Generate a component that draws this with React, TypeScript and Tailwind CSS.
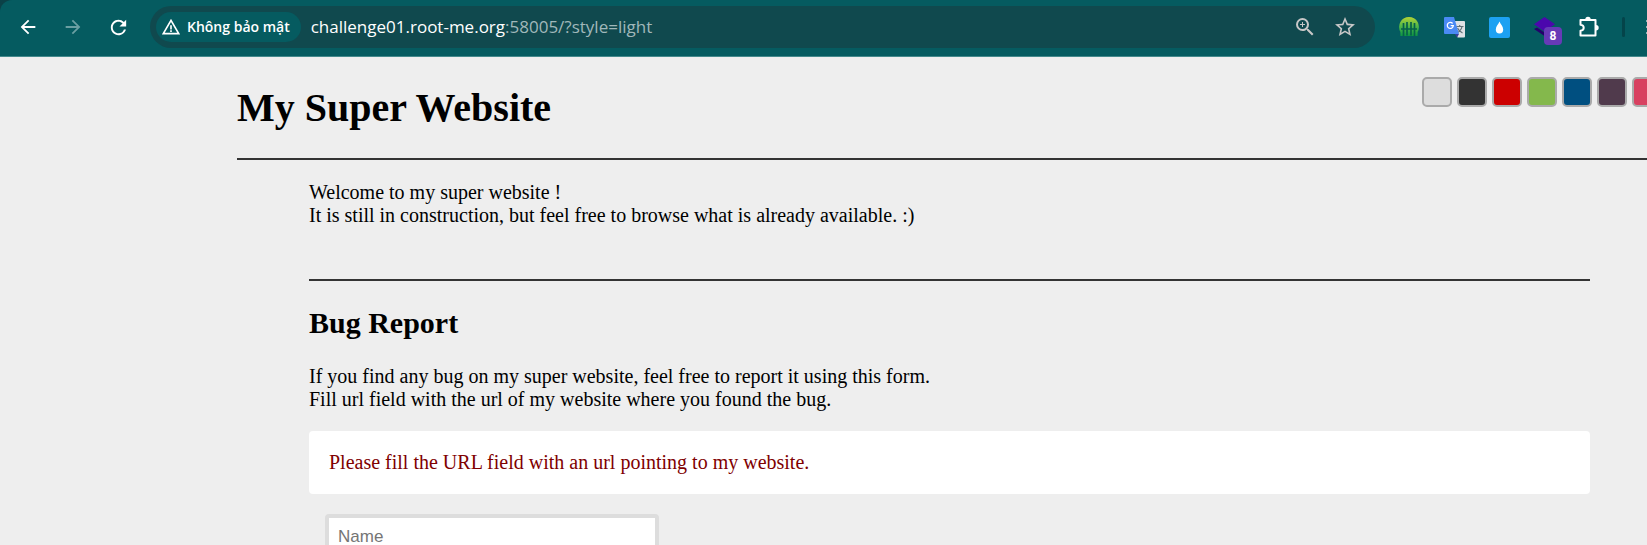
import type { ReactNode } from "react";
import { MdArrowBack, MdArrowForward, MdRefresh, MdStarBorder, MdWarningAmber, MdZoomIn } from "react-icons/md";

const themes = [
  { name: "light", color: "bg-[#dddddd]" },
  { name: "dark", color: "bg-[#333333]" },
  { name: "red", color: "bg-[#cc0000]" },
  { name: "green", color: "bg-[#84b84c]" },
  { name: "blue", color: "bg-[#004f80]" },
  { name: "purple", color: "bg-[#503a4c]" },
  { name: "pink", color: "bg-[#d84060]" },
];

function IconButton({ label, disabled, children }: { label: string; disabled?: boolean; children: ReactNode }) {
  return (
    <button
      type="button"
      aria-label={label}
      disabled={disabled}
      className="flex size-6 shrink-0 items-center justify-center text-white disabled:text-[#6a9fa2]"
    >
      {children}
    </button>
  );
}

function TowersIcon() {
  return (
    <svg viewBox="0 0 20 20" className="size-5" aria-hidden="true">
      <defs>
        <linearGradient id="towers" x1="0" y1="0" x2="0" y2="1">
          <stop offset="0" stopColor="#b4d334" />
          <stop offset="0.5" stopColor="#4db648" />
          <stop offset="1" stopColor="#0b9444" />
        </linearGradient>
      </defs>
      <path d="M10 0a10 10 0 0 1 8.600 15V19H1.400v-4A10 10 0 0 1 10 0z" fill="url(#towers)" />
      <path
        d="M4.500 6v13M8 5v13.500M12 5v13.500M15.500 6v13M2 12h16"
        stroke="#06604a"
        strokeWidth="1.700"
        fill="none"
      />
    </svg>
  );
}

function TranslateIcon() {
  return (
    <svg viewBox="0 0 21 21" className="size-[21px]" aria-hidden="true">
      <path d="M8 4h12a1 1 0 0 1 1 1v14.500a1 1 0 0 1-1 1h-6.500z" fill="#dfe1e5" />
      <path d="M12 9.500h7.500M15.700 8v1.500M18 9.500c-.5 3-2.500 5-5 6.500M13.500 11c1 2.500 3 4 5 5" stroke="#5f7076" strokeWidth="1.200" fill="none" />
      <path d="M11 17h4l-2 3.500z" fill="#3a3f9c" />
      <path d="M1 0h9l5 17H1a1 1 0 0 1-1-1V1a1 1 0 0 1 1-1z" fill="#4a8af4" />
      <path d="M8.600 6.500A3 3 0 1 0 9.300 8.700H6.700" stroke="#fff" strokeWidth="1.300" fill="none" />
    </svg>
  );
}

function DropIcon() {
  return (
    <svg viewBox="0 0 21 21" className="size-[21px]" aria-hidden="true">
      <rect width="21" height="21" rx="2" fill="#1da1f2" />
      <path d="M10.500 4.500c1 2.500 3.700 5 3.700 8a3.700 3.900 0 0 1-7.400 0c0-3 2.700-5.500 3.700-8z" fill="#fff" />
    </svg>
  );
}

function LayersIcon() {
  return (
    <svg viewBox="0 0 21 21" className="size-[21px]" aria-hidden="true">
      <path d="M0 12l3-1.500 7.500 5L18 10.500l3 1.500-10.500 7z" fill="#23006b" />
      <path d="M10.500 0L21 7.200 10.500 14.500 0 7.200z" fill="#4b07ad" />
    </svg>
  );
}

function PuzzleIcon() {
  return (
    <svg viewBox="0 0 22 22" className="size-[22px]" aria-hidden="true">
      <path
        d="M2.500 4h15v15.500H2.500v-4.700c4.300-.4 4.300-5.600 0-6z"
        fill="none"
        stroke="#fff"
        strokeWidth="2"
        strokeLinejoin="round"
      />
      <path d="M7.300 3.500a2.700 2.700 0 0 1 5.400 0zM18 9a2.700 2.700 0 0 1 0 5.400z" fill="#fff" />
    </svg>
  );
}

function Toolbar() {
  return (
    <div className="bg-[#0b4147]">
      <header className="flex h-[57px] items-center overflow-hidden rounded-tl-xl border-b border-[#43898c] bg-[#055b60] pb-0.5 font-['Open_Sans','Noto_Sans',sans-serif]">
        <nav aria-label="Navigation" className="flex shrink-0 gap-[21px] pr-5 pl-4">
          <IconButton label="Back">
            <MdArrowBack className="size-[22px]" />
          </IconButton>
          <IconButton label="Forward" disabled>
            <MdArrowForward className="size-[22px]" />
          </IconButton>
          <IconButton label="Reload">
            <MdRefresh className="size-[23px]" />
          </IconButton>
        </nav>
        <div className="flex h-[42px] min-w-0 flex-1 items-center rounded-full bg-[#10494e] pr-[18px] pl-1.5">
          <button
            type="button"
            className="flex h-[30px] shrink-0 items-center gap-1.5 rounded-full bg-[#055b60] pr-[11px] pl-[5px] text-sm font-semibold whitespace-nowrap text-white"
          >
            <MdWarningAmber className="size-5" />
            Không bảo mật
          </button>
          <div
            role="textbox"
            aria-label="Address"
            aria-readonly="true"
            tabIndex={0}
            className="ml-[10px] min-w-0 flex-1 truncate text-[17px] leading-6 text-[#a0b8ba]"
          >
            <span className="text-white">challenge01.root-me.org</span>:58005/?style=light
          </div>
          <div className="flex shrink-0 gap-4">
            <button type="button" aria-label="Zoom" className="text-[#c7c7c7]">
              <MdZoomIn className="size-6" />
            </button>
            <button type="button" aria-label="Bookmark" className="text-[#c7c7c7]">
              <MdStarBorder className="size-6" />
            </button>
          </div>
        </div>
        <div className="flex shrink-0 items-center gap-[21px] pl-[22px]">
          <IconButton label="Towers">
            <TowersIcon />
          </IconButton>
          <IconButton label="Translate">
            <TranslateIcon />
          </IconButton>
          <IconButton label="Drop">
            <DropIcon />
          </IconButton>
          <div className="relative">
            <IconButton label="Layers">
              <LayersIcon />
            </IconButton>
            <span className="absolute top-3 left-3 flex size-[18px] items-center justify-center rounded bg-[#673ab7] font-['Roboto',sans-serif] text-xs font-bold text-white">
              8
            </span>
          </div>
          <IconButton label="Extensions">
            <PuzzleIcon />
          </IconButton>
          <span className="h-5 w-[3px] rounded-full bg-[#04444a]" />
          <span className="flex w-px flex-col gap-1" aria-hidden="true">
            <span className="h-0.5 bg-[#8fb3b5]" />
            <span className="h-0.5 bg-[#8fb3b5]" />
            <span className="h-0.5 bg-[#8fb3b5]" />
          </span>
        </div>
      </header>
    </div>
  );
}

export default function App() {
  return (
    <div className="flex h-screen flex-col overflow-hidden bg-[#eeeeee]">
      <Toolbar />
      <div className="min-h-0 flex-1 overflow-hidden pl-[237px] font-['Liberation_Serif',serif] text-xl leading-[23px] text-black">
        <div className="-mr-[15px]">
          <div className="flex items-start justify-between border-b-2 border-[#333333] pt-5 pb-[27px]">
            <h1 className="pt-2 text-[40px] leading-[46px] font-bold">My Super Website</h1>
            <ul className="flex gap-[5px]">
              {themes.map((theme) => (
                <li key={theme.name}>
                  <a
                    href={`?style=${theme.name}`}
                    aria-label={theme.name}
                    className={`block size-[30px] rounded-[5px] border-2 border-[#aaaaaa] ${theme.color}`}
                  />
                </li>
              ))}
            </ul>
          </div>
          <main className="px-[72px]">
            <p className="pt-[21px] pb-[52px]">
              Welcome to my super website !
              <br />
              It is still in construction, but feel free to browse what is already available. :)
            </p>
            <section className="border-t-2 border-[#333333] pt-[25px]">
              <h2 className="text-3xl leading-[34px] font-bold">Bug Report</h2>
              <p className="pt-[25px] pb-5">
                If you find any bug on my super website, feel free to report it using this form.
                <br />
                Fill url field with the url of my website where you found the bug.
              </p>
              <p role="alert" className="rounded-sm bg-white p-5 text-[#800000]">
                Please fill the URL field with an url pointing to my website.
              </p>
              <form className="px-4 pt-5">
                <input
                  type="text"
                  name="name"
                  aria-label="Name"
                  placeholder="Name"
                  className="block w-[334px] rounded-sm border-4 border-[#dddddd] bg-white p-[9px] font-['Liberation_Sans',sans-serif] text-[17px] leading-5 placeholder:text-[#757575]"
                />
              </form>
            </section>
          </main>
        </div>
      </div>
    </div>
  );
}
